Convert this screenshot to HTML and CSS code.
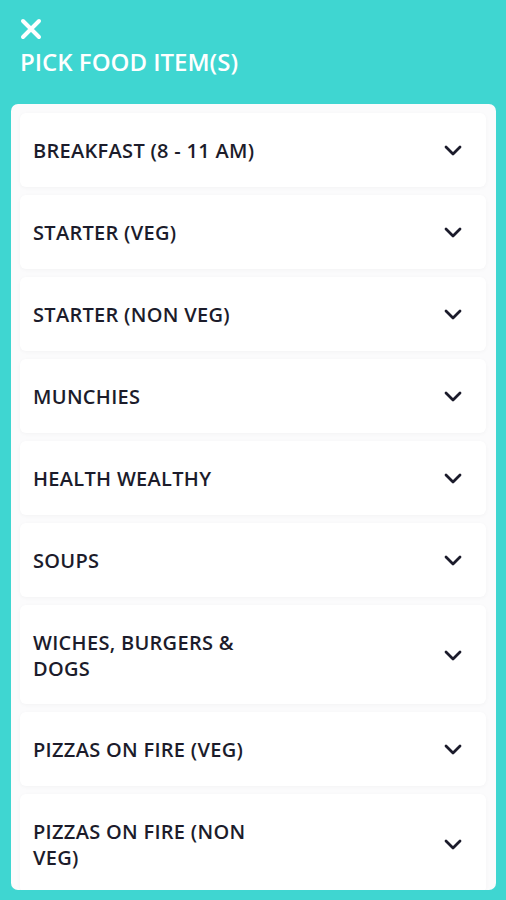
FILE: index.html
```html
<!DOCTYPE html>
<html>
<head>
<meta charset="utf-8">
<link rel="stylesheet" href="styles.css">
</head>
<body>
<div class="screen">
  <header class="header">
    <svg class="close" width="22" height="22" viewBox="0 0 22 22"><path d="M3 3 L19 19 M19 3 L3 19" stroke="#fff" stroke-width="4" stroke-linecap="round"/></svg>
    <h1 class="title">PICK FOOD ITEM(S)</h1>
  </header>
  <div class="panel">
    <div class="row"><span class="label">BREAKFAST (8 - 11 AM)</span><svg class="chev" width="18" height="12" viewBox="0 0 18 12"><path d="M2 2 L9 9 L16 2" fill="none" stroke="#1b1b2b" stroke-width="2.8" stroke-linecap="round" stroke-linejoin="round"/></svg></div>
    <div class="row"><span class="label">STARTER (VEG)</span><svg class="chev" width="18" height="12" viewBox="0 0 18 12"><path d="M2 2 L9 9 L16 2" fill="none" stroke="#1b1b2b" stroke-width="2.8" stroke-linecap="round" stroke-linejoin="round"/></svg></div>
    <div class="row"><span class="label">STARTER (NON VEG)</span><svg class="chev" width="18" height="12" viewBox="0 0 18 12"><path d="M2 2 L9 9 L16 2" fill="none" stroke="#1b1b2b" stroke-width="2.8" stroke-linecap="round" stroke-linejoin="round"/></svg></div>
    <div class="row"><span class="label">MUNCHIES</span><svg class="chev" width="18" height="12" viewBox="0 0 18 12"><path d="M2 2 L9 9 L16 2" fill="none" stroke="#1b1b2b" stroke-width="2.8" stroke-linecap="round" stroke-linejoin="round"/></svg></div>
    <div class="row"><span class="label">HEALTH WEALTHY</span><svg class="chev" width="18" height="12" viewBox="0 0 18 12"><path d="M2 2 L9 9 L16 2" fill="none" stroke="#1b1b2b" stroke-width="2.8" stroke-linecap="round" stroke-linejoin="round"/></svg></div>
    <div class="row"><span class="label">SOUPS</span><svg class="chev" width="18" height="12" viewBox="0 0 18 12"><path d="M2 2 L9 9 L16 2" fill="none" stroke="#1b1b2b" stroke-width="2.8" stroke-linecap="round" stroke-linejoin="round"/></svg></div>
    <div class="row"><span class="label">WICHES, BURGERS &amp; DOGS</span><svg class="chev" width="18" height="12" viewBox="0 0 18 12"><path d="M2 2 L9 9 L16 2" fill="none" stroke="#1b1b2b" stroke-width="2.8" stroke-linecap="round" stroke-linejoin="round"/></svg></div>
    <div class="row"><span class="label">PIZZAS ON FIRE (VEG)</span><svg class="chev" width="18" height="12" viewBox="0 0 18 12"><path d="M2 2 L9 9 L16 2" fill="none" stroke="#1b1b2b" stroke-width="2.8" stroke-linecap="round" stroke-linejoin="round"/></svg></div>
    <div class="row"><span class="label">PIZZAS ON FIRE (NON VEG)</span><svg class="chev" width="18" height="12" viewBox="0 0 18 12"><path d="M2 2 L9 9 L16 2" fill="none" stroke="#1b1b2b" stroke-width="2.8" stroke-linecap="round" stroke-linejoin="round"/></svg></div>
  </div>
</div>
</body>
</html>
```
FILE: styles.css
```css
* { box-sizing: border-box; }
html, body { margin: 0; padding: 0; }
body {
  width: 506px;
  height: 900px;
  overflow: hidden;
  background: #3fd6d1;
  font-family: "Open Sans", "Noto Sans", sans-serif;
}
.screen {
  display: flex;
  flex-direction: column;
  height: 900px;
  padding: 18px 10px 10px 11px;
}
.header {
  display: flex;
  flex-direction: column;
  align-items: flex-start;
  padding-left: 9px;
}
.close { display: block; }
.title {
  margin: 7px 0 0 0;
  color: #fff;
  font-size: 24px;
  font-weight: 600;
  line-height: 30px;
  letter-spacing: 0;
}
.panel {
  margin-top: 27px;
  flex: 1;
  background: #fbfbfc;
  border-radius: 7px;
  padding: 9px 10px 0 9px;
  overflow: hidden;
  display: flex;
  flex-direction: column;
  gap: 8px;
}
.row {
  flex-shrink: 0;
  background: #fff;
  border-radius: 6px;
  box-shadow: 0 1px 4px rgba(0,0,0,0.035);
  display: flex;
  align-items: center;
  justify-content: space-between;
  padding: 24.5px 24px 22.5px 13px;
  min-height: 74px;
}
.label {
  max-width: 246px;
  color: #1c1c2b;
  font-size: 20px;
  font-weight: 600;
  line-height: 26px;
  letter-spacing: 0.3px;
}
.chev { display: block; flex-shrink: 0; }
```
